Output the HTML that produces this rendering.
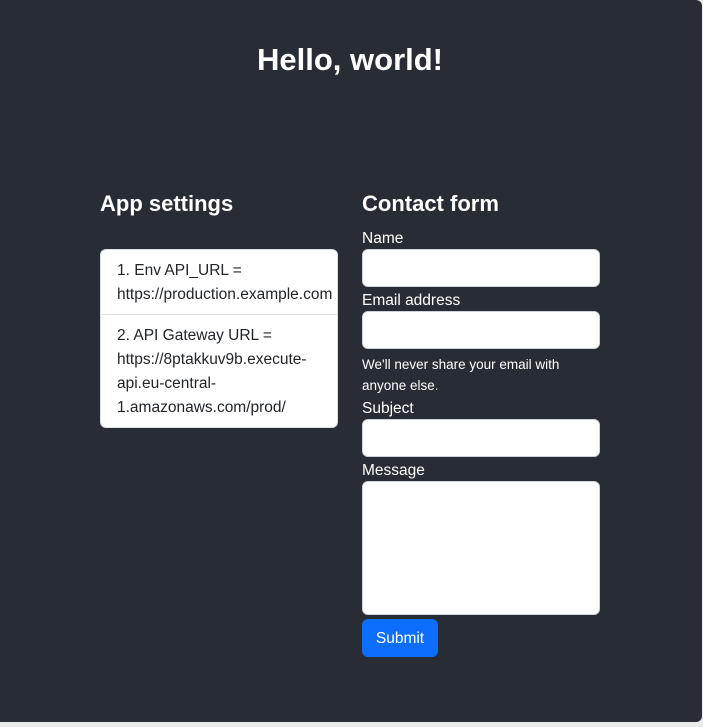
<!DOCTYPE html>
<html><head><meta charset="utf-8"><style>
*{box-sizing:border-box}
body{margin:0;background:#e9e9ea;width:703px;height:727px;overflow:hidden;font-family:"Liberation Sans",sans-serif;}
.app{position:absolute;left:0;top:0;width:702px;height:722px;background:#282c34;border-radius:0 6px 6px 0;color:#fff}
h1{position:absolute;left:0;width:700px;top:40px;margin:0;text-align:center;font-size:31px;font-weight:bold;line-height:40px}
h2{position:absolute;margin:0;font-size:22px;font-weight:bold;line-height:28px;top:190px}
.list{position:absolute;left:100px;top:249px;width:238px;background:#fff;border:1px solid #dee2e6;border-radius:6px;color:#212529;font-size:15.5px;line-height:24px;overflow:hidden}
.it{padding:9px 0 7px 16px;white-space:nowrap}
.it+.it{border-top:1px solid #dee2e6}
label{position:absolute;left:362px;font-size:15.5px;line-height:24px}
.in{position:absolute;left:362px;width:238px;height:38px;background:#fff;border:1px solid #ced4da;border-radius:6px}
.help{position:absolute;left:362px;top:354px;width:238px;font-size:13.5px;line-height:21px}
.btn{position:absolute;left:362px;top:619px;width:76px;height:38px;background:#0d6efd;border-radius:6px;color:#fff;font-size:15.5px;line-height:39px;text-align:center}
</style></head><body>
<div class="app">
<h1>Hello, world!</h1>
<h2 style="left:100px">App settings</h2>
<h2 style="left:362px">Contact form</h2>
<div class="list">
<div class="it">1. Env API_URL =<br>https://production.example.com</div>
<div class="it">2. API Gateway URL =<br>https://8ptakkuv9b.execute-<br>api.eu-central-<br>1.amazonaws.com/prod/</div>
</div>
<label style="top:227px">Name</label>
<div class="in" style="top:249px"></div>
<label style="top:289px">Email address</label>
<div class="in" style="top:311px"></div>
<div class="help">We'll never share your email with anyone else.</div>
<label style="top:397px">Subject</label>
<div class="in" style="top:419px"></div>
<label style="top:459px">Message</label>
<div class="in" style="top:481px;height:134px"></div>
<div class="btn">Submit</div>
</div>
</body></html>
